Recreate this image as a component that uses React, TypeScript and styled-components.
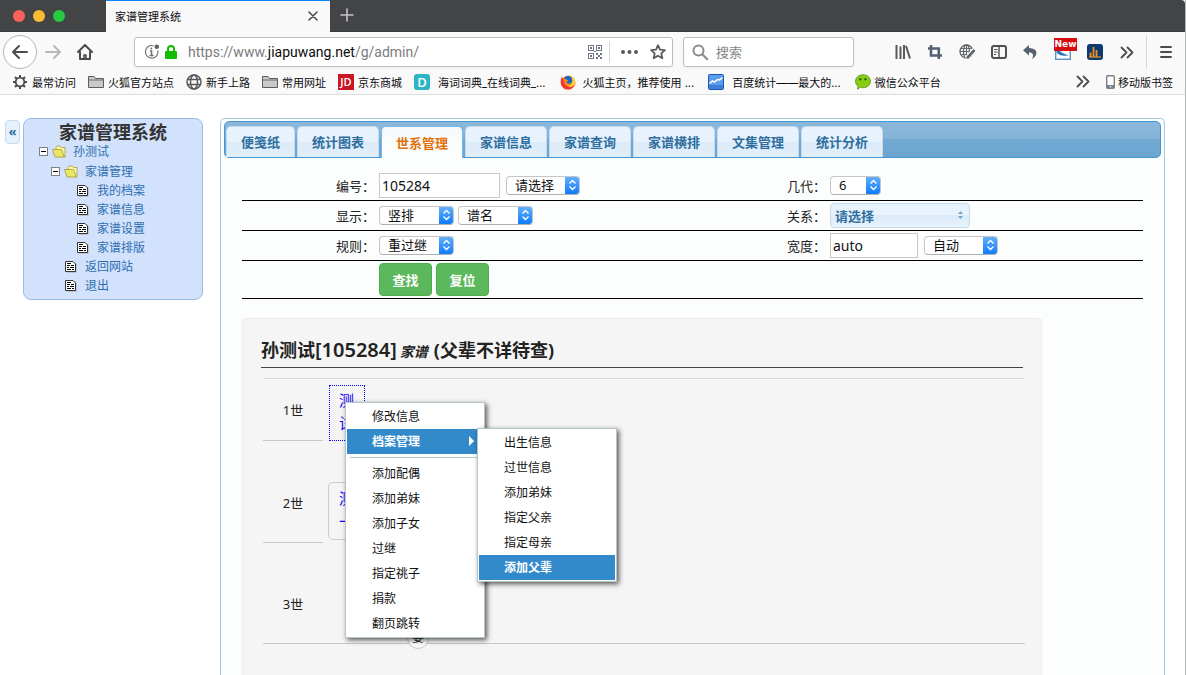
import React from "react";
import styled, { createGlobalStyle, css } from "styled-components";

const Global = createGlobalStyle`
  *, *::before, *::after { box-sizing: border-box; }
  html, body, #root { height: 100%; }
  body {
    margin: 0;
    overflow: hidden;
    background: #fff;
    color: #222;
    font-family: "Noto Sans", "Noto Sans CJK SC", sans-serif;
    font-size: 13px;
  }
  button, input, select { font: inherit; color: inherit; margin: 0; }
  a { color: inherit; text-decoration: none; }
  ul { list-style: none; margin: 0; padding: 0; }
  svg { display: block; flex: none; }
`;

/* ---------- browser chrome ---------- */

const Window = styled.div`
  display: flex;
  flex-direction: column;
  height: 100vh;
  border-right: 1px solid #b4b6b8;
`;

const TitleBar = styled.div`
  display: flex;
  flex: none;
  height: 32px;
  background: #434445;
  border-bottom: 1px solid #38393b;
  border-top-right-radius: 4px;
`;

const Lights = styled.div`
  display: flex;
  align-items: center;
  gap: 8px;
  width: 106px;
  padding-left: 13px;
`;

const Light = styled.button<{ $color: string }>`
  width: 12px;
  height: 12px;
  padding: 0;
  border: 0;
  border-radius: 50%;
  background: ${(p) => p.$color};
`;

const PageTab = styled.div`
  display: flex;
  align-items: center;
  justify-content: space-between;
  width: 224px;
  height: 32px;
  padding: 0 12px 2px 9px;
  background: #f9f9fa;
  border-top: 1px solid #0a84ff;
  color: #0c0c0d;
  font-size: 11px;
`;

const IconButton = styled.button<{ $w?: number; $dim?: boolean }>`
  display: flex;
  align-items: center;
  justify-content: center;
  flex: none;
  width: ${(p) => p.$w ?? 32}px;
  height: 32px;
  padding: 0;
  border: 0;
  background: none;
  color: ${(p) => (p.$dim ? "#b9b9ba" : "#4c4c4f")};
`;

const NewTab = styled(IconButton)`
  width: 34px;
  height: 30px;
  color: #c4c4c5;
`;

const NavBar = styled.div`
  display: flex;
  flex: none;
  align-items: center;
  height: 40px;
  padding: 0 3px;
  background: #f9f9fa;
`;

const BackButton = styled(IconButton)`
  width: 34px;
  height: 34px;
  border: 1px solid #b3b3b4;
  border-radius: 50%;
  background: #fff;
`;

const fieldLook = css`
  display: flex;
  align-items: center;
  height: 30px;
  border: 1px solid #bfbfc0;
  border-radius: 3px;
  background: #fff;
  box-shadow: 0 1px 3px rgba(0, 0, 0, 0.05);
`;

const UrlField = styled.div`
  ${fieldLook}
  flex: 1;
  margin-left: 33px;
  padding-left: 9px;
`;

const SiteIdentity = styled.span`
  display: flex;
  align-items: center;
  gap: 5px;
`;

const UrlText = styled.a`
  flex: 1;
  margin-left: 11px;
  font-family: Roboto, "Liberation Sans", sans-serif;
  font-size: 14px;
  color: #7b7b7c;
  b { font-weight: 400; color: #0c0c0d; }
`;

const FieldDivider = styled.span`
  width: 1px;
  height: 22px;
  margin: 0 5px 0 7px;
  background: #d7d7db;
`;

const SearchField = styled.label`
  ${fieldLook}
  width: 171px;
  margin: 0 33px 0 10px;
  padding-left: 8px;
  gap: 7px;
`;

const SearchInput = styled.input`
  width: 120px;
  padding: 0;
  border: 0;
  outline: 0;
  background: none;
  font-size: 13px;
  &::placeholder { color: #858586; opacity: 1; }
`;

const NavDivider = styled.span`
  width: 1px;
  height: 34px;
  margin: 0 3px;
  background: #d7d7db;
`;

const Bookmarks = styled.nav`
  display: flex;
  flex: none;
  align-items: center;
  height: 23px;
  padding: 0 12px 3px;
  background: #f9f9fa;
  border-bottom: 1px solid #dcdcdd;
  color: #0c0c0d;
  font-family: Inter, "Noto Sans CJK SC", sans-serif;
  font-size: 11px;
  white-space: nowrap;
`;

const Bookmark = styled.a<{ $gap?: number; $after?: number }>`
  display: flex;
  align-items: center;
  gap: ${(p) => p.$gap ?? 4}px;
  margin-right: ${(p) => p.$after ?? 12}px;
`;

const MoreBookmarks = styled(IconButton)`
  width: 14px;
  height: 20px;
  margin: 0 16px 0 auto;
`;

/* ---------- page ---------- */

const Page = styled.div`
  display: flex;
  flex: 1;
  align-items: flex-start;
  min-height: 0;
  padding: 23px 20px 0 5px;
`;

const Collapse = styled.button`
  width: 15px;
  height: 24px;
  margin: 2px 3px 0 0;
  padding: 0 0 3px;
  border: 1px solid #c5dbec;
  border-radius: 4px;
  background: #e6f1fb;
  color: #2e6e9e;
  font-weight: 700;
  font-size: 13px;
  line-height: 18px;
`;

const Sidebar = styled.aside`
  width: 180px;
  margin-right: 17px;
  padding: 0 0 4px;
  border: 1px solid #99bbe8;
  border-radius: 8px;
  background: #d2e2fc;
`;

const SidebarTitle = styled.h1`
  margin: 0;
  padding-top: 3px;
  height: 22px;
  line-height: 20px;
  font-size: 18px;
  font-weight: 700;
  text-align: center;
  color: #333;
`;

const TreeRow = styled.li<{ $level: number; $folder?: boolean }>`
  display: flex;
  align-items: center;
  height: ${(p) => (p.$folder ? 20 : 19)}px;
  padding-left: ${(p) => (p.$folder ? 3 : 5) + p.$level * 12}px;
  font-size: 12px;
  line-height: 19px;
  color: #2e6eb0;
  a { margin-left: ${(p) => (p.$folder ? 7 : 8)}px; }
`;

const Toggle = styled.button`
  display: flex;
  padding: 0;
  margin-right: 4px;
  border: 0;
  background: none;
`;

const Main = styled.main`
  display: flex;
  flex-direction: column;
  flex: 1;
  align-self: stretch;
  min-width: 0;
  padding: 2px 3px 0;
  border: 1px solid #a6c9e2;
  border-bottom: 0;
  border-radius: 5px 5px 0 0;
  background: #fcfdfd;
`;

const TabStrip = styled.div`
  display: flex;
  flex: none;
  align-items: flex-end;
  gap: 2px;
  height: 37px;
  padding-left: 1px;
  border: 1px solid #4297d7;
  border-radius: 5px;
  background: linear-gradient(#8bb7da 0, #84b2d7 50%, #72a9d3 50%, #6da5d1 100%);
`;

const Tab = styled.button<{ $active?: boolean }>`
  height: 31px;
  padding: 0 14px 1px;
  border: 1px solid #c5dbec;
  border-bottom: 0;
  border-radius: 5px 5px 0 0;
  background: linear-gradient(#e8f2fc 50%, #dcebf9 50%, #e2effb);
  color: #2e6e9e;
  font-size: 13px;
  font-weight: 700;
  white-space: nowrap;
  ${(p) =>
    p.$active &&
    css`
      height: 32px;
      margin-bottom: -1px;
      border-color: #79b7e7;
      background: linear-gradient(#f4f8fb, #fcfdfd 60%);
      color: #e17009;
    `}
`;

const FormTable = styled.table`
  width: calc(100% - 36px);
  margin: 13px 0 0 18px;
  border-collapse: collapse;
  table-layout: fixed;
  td, th {
    height: 30px;
    padding: 0;
    border-bottom: 1px solid #000;
    text-align: left;
    font-weight: 400;
  }
  th { padding-left: 94px; }
  tr:first-child td { height: 29px; }
  tr:first-child th { height: 29px; }
  tr:last-child td { height: 38px; }
`;

const Column = styled.col<{ $w: number }>`
  width: ${(p) => p.$w}px;
`;

const Controls = styled.div<{ $gap?: number }>`
  display: flex;
  align-items: center;
  gap: ${(p) => p.$gap ?? 4}px;
`;

const TextBox = styled.input<{ $w: number }>`
  width: ${(p) => p.$w}px;
  height: 25px;
  padding: 0 2px;
  border: 1px solid #c8c8c8;
  background: #fff;
  color: #111;
  font-size: 14px;
`;

const SelectBox = styled.span<{ $w: number }>`
  display: flex;
  width: ${(p) => p.$w}px;
  height: 19px;
  border: 1px solid #c6c6c6;
  border-bottom-color: #b0b0b0;
  border-radius: 4px;
  background: #fff;
  overflow: hidden;
  select {
    flex: 1;
    min-width: 0;
    height: 17px;
    padding: 0 0 0 8px;
    border: 0;
    appearance: none;
    background: none;
    color: #111;
    line-height: 17px;
  }
`;

const Cap = styled.span`
  display: flex;
  align-items: center;
  justify-content: center;
  width: 15px;
  margin: -1px -1px -1px 0;
  background: linear-gradient(#66b1fb, #0a79fb);
`;

const RelationButton = styled.button`
  display: flex;
  align-items: center;
  justify-content: space-between;
  width: 140px;
  height: 25px;
  padding: 0 6px 0 4px;
  border: 1px solid #c5dbec;
  border-radius: 4px;
  background: linear-gradient(#e8f2fc 50%, #dcebf9 50%, #e6f2fc);
  color: #2e6e9e;
  font-weight: 700;
`;

const GreenButton = styled.button`
  min-width: 53px;
  height: 33px;
  padding: 0 12px;
  border: 1px solid #4cae4c;
  border-radius: 4px;
  background: #5cb85c;
  color: #fff;
  font-weight: 700;
`;

const Card = styled.section`
  position: relative;
  flex: 1;
  width: 800px;
  max-width: 100%;
  margin: 19px 0 0 18px;
  padding: 20px 16px 0 18px;
  border: 1px solid #ececec;
  border-bottom: 0;
  border-radius: 4px 4px 0 0;
  background: #f5f5f5;
`;

const CardTitle = styled.h2`
  display: flex;
  align-items: baseline;
  height: 29px;
  margin: 0 2px 10px 0;
  border-bottom: 1px solid #444;
  line-height: 22px;
  font-size: 18px;
  font-weight: 700;
  color: #222;
  em { font-size: 14px; margin-right: 6px; }
`;

const Digits = styled.span`
  margin-right: 3px;
  font-size: 20px;
  font-weight: 600;
`;

const Generations = styled.div`
  margin-left: 2px;
  border-top: 1px solid #dadada;
  border-bottom: 1px solid #c8c8c8;
`;

const Generation = styled.div<{ $h: number }>`
  display: flex;
  gap: 5px;
  height: ${(p) => p.$h}px;
`;

const GenerationName = styled.div<{ $later?: boolean; $last?: boolean }>`
  display: flex;
  align-items: center;
  justify-content: center;
  width: 60px;
  padding-top: ${(p) => (p.$later ? 22 : 0)}px;
  color: #222;
  border-bottom: ${(p) => (p.$last ? 0 : "1px solid #c8c8c8")};
`;

const Person = styled.a<{ $focus?: boolean }>`
  align-self: flex-end;
  width: 38px;
  height: 58px;
  padding: 4px 10px;
  margin-bottom: 3px;
  border: 1px solid #ccc;
  border-radius: 5px;
  color: #1a00ff;
  font-size: 15px;
  line-height: 23px;
  ${(p) =>
    p.$focus &&
    css`
      margin-bottom: -1px;
      border-color: transparent;
      border-radius: 2px;
      outline: 1px dotted #00f;
      outline-offset: -2px;
    `}
`;

const SpouseBadge = styled.span`
  position: absolute;
  left: 164px;
  top: 308px;
  width: 22px;
  height: 22px;
  border: 1px solid #ccc;
  border-radius: 50%;
  background: #fbfbfb;
  font-size: 12px;
  line-height: 20px;
  text-align: center;
`;

const Menu = styled.ul<{ $x: number; $y: number }>`
  position: absolute;
  z-index: 2;
  left: ${(p) => p.$x}px;
  top: ${(p) => p.$y}px;
  width: 140px;
  padding: 1px;
  border: 1px solid #b4c6c6;
  background: #fff;
  box-shadow: 2px 2px 5px rgba(0, 0, 0, 0.65);
`;

const MenuItem = styled.li`
  position: relative;
`;

const MenuButton = styled.button<{ $on?: boolean }>`
  display: flex;
  align-items: center;
  justify-content: space-between;
  width: 100%;
  height: 25px;
  padding: 0 9px 0 25px;
  border: 0;
  background: ${(p) => (p.$on ? "#338acb" : "none")};
  color: ${(p) => (p.$on ? "#fff" : "#111")};
  font-size: 12px;
  font-weight: ${(p) => (p.$on ? 700 : 400)};
`;

const MenuLine = styled.li`
  height: 1px;
  margin: 3px 3px;
  background: #b4c6c6;
`;

/* ---------- icons ---------- */

const stroke = {
  fill: "none",
  stroke: "currentColor",
  strokeWidth: 2,
  strokeLinecap: "round" as const,
  strokeLinejoin: "round" as const,
};

const BackIcon = () => (
  <svg width="16" height="16" viewBox="0 0 16 16" {...stroke}>
    <path d="M15 8H1M7 2L1 8l6 6" />
  </svg>
);

const ForwardIcon = () => (
  <svg width="16" height="16" viewBox="0 0 16 16" {...stroke}>
    <path d="M1 8h14M9 2l6 6-6 6" />
  </svg>
);

const HomeIcon = () => (
  <svg width="16" height="16" viewBox="0 0 16 16" {...stroke}>
    <path d="M1 8l7-7 7 7M3 8v7h10V8" />
    <path d="M7 15v-4h2v4" strokeWidth="1.6" />
  </svg>
);

const InfoIcon = () => (
  <svg width="16" height="16" viewBox="0 0 16 16" fill="none" stroke="#737373" strokeWidth="1.2">
    <path d="M9.5 1.8A6.3 6.3 0 1 0 13.8 6.3" />
    <path d="M6 7h1.5v4.5M5.5 11.5h4" strokeWidth="1.6" />
    <circle cx="7.3" cy="4.4" r="1" fill="#737373" stroke="none" />
    <circle cx="12.8" cy="2.8" r="2.3" fill="#636365" stroke="none" />
  </svg>
);

const LockIcon = () => (
  <svg width="12" height="14" viewBox="0 0 12 14">
    <path d="M3 7V4a3 3 0 0 1 6 0v3" fill="none" stroke="#12bc00" strokeWidth="2" />
    <rect y="6" width="12" height="8" rx="1" fill="#12bc00" />
  </svg>
);

const QrIcon = () => (
  <svg width="14" height="14" viewBox="0 0 14 14" fill="#717786">
    <path
      fillRule="evenodd"
      d="M0 0h6v6H0zM1 1v4h4V1zM8 0h6v6H8zM9 1v4h4V1zM0 8h6v6H0zM1 9v4h4V9z"
    />
    <path d="M2 2h2v2H2zM10 2h2v2h-2zM2 10h2v2H2zM8 8h2v2H8zM10 10h2v2h-2zM12 8h2v2h-2zM8 12h2v2h-2zM12 12h2v2h-2zM6 6h2v1H6z" />
  </svg>
);

const DotsIcon = () => (
  <svg width="17" height="4" viewBox="0 0 17 4" fill="#5a5a5c">
    <circle cx="2" cy="2" r="2" />
    <circle cx="8.5" cy="2" r="2" />
    <circle cx="15" cy="2" r="2" />
  </svg>
);

const StarIcon = () => (
  <svg width="16" height="16" viewBox="0 0 16 16" fill="none" stroke="#5a5a5c" strokeWidth="1.8" strokeLinejoin="round">
    <path d="M8 1.2l2 4.4 4.9.5-3.6 3.3 1 4.9L8 11.8l-4.3 2.5 1-4.9L1.1 6.1 6 5.6z" />
  </svg>
);

const SearchIcon = () => (
  <svg width="17" height="17" viewBox="0 0 17 17" fill="none" stroke="#8a8a8c" strokeWidth="2">
    <circle cx="6.5" cy="6.5" r="5" />
    <path d="M10.2 10.2l5.6 5.6" />
  </svg>
);

const LibraryIcon = () => (
  <svg width="16" height="14" viewBox="0 0 16 14" fill="none" stroke="#5a5a5c" strokeWidth="2">
    <path d="M1.5 0v14M5.5 1.5V14M9 0v14M11 1l4 12.5" />
  </svg>
);

const CropIcon = () => (
  <svg width="16" height="16" viewBox="0 0 16 16" fill="none" stroke="#556070" strokeWidth="2.6">
    <path d="M4 1v10.5h11M1 4.5h10.8V15" />
  </svg>
);

const GlobePenIcon = () => (
  <svg width="17" height="16" viewBox="0 0 17 16" fill="none" stroke="#606468" strokeWidth="1.3">
    <circle cx="7.5" cy="7.5" r="6.5" />
    <ellipse cx="7.5" cy="7.5" rx="3" ry="6.5" />
    <path d="M1 7.500h13M2 4.400h11M2 10.600h7M7.500 1v13" strokeWidth="1" />
    <path d="M15.500 5.500L9 13l-.800 2" stroke="#f9f9fa" strokeWidth="4.500" />
    <path d="M15.500 6L9 13l-.800 1.500" strokeWidth="2.600" />
  </svg>
);

const SidebarIcon = () => (
  <svg width="16" height="14" viewBox="0 0 16 14" fill="none" stroke="#4f4f52" strokeWidth="2">
    <rect x="1" y="1" width="14" height="12" rx="2" />
    <path d="M8 1v12" strokeWidth="1.4" />
    <path d="M3 4.5h3.5M3 7h3.5M3 9.5h2" strokeWidth="1" />
  </svg>
);

const UndoIcon = () => (
  <svg width="16" height="14" viewBox="0 0 16 14" fill="#56616d">
    <path d="M6 0L0 5.2 6 10.4V7.4c4 0 5.200 2.200 3 6.600 6.600-4 6.300-10.600-3-11z" />
  </svg>
);

const NewBox = styled.span`
  display: flex;
  flex-direction: column;
  flex: none;
  width: 28px;
  height: 28px;
  padding-left: 5px;
  b {
    flex: none;
    width: 23px;
    height: 13px;
    background: #d70c12;
    color: #fff;
    font: 700 9px/13px "DejaVu Sans", sans-serif;
    text-align: center;
  }
`;

const NewIcon = () => (
  <NewBox>
    <b>New</b>
    <svg width="17" height="9" viewBox="0 0 17 9">
      <rect x="1.700" y="-4" width="14.600" height="12.300" fill="#fff" stroke="#5b93c3" strokeWidth="1.400" />
      <path d="M2.500 0H6c2 2.500 5 3 8.500 4.200-4.500 1.300-9.500.500-12-2.700z" fill="#2f76b5" />
    </svg>
  </NewBox>
);

const ChartIcon = () => (
  <svg width="16" height="16" viewBox="0 0 16 16">
    <rect width="16" height="16" rx="3" fill="#0b3970" />
    <path d="M3.500 13V8.500M6.500 13V3M9.500 13V6" stroke="#f4901e" strokeWidth="1.800" fill="none" />
    <path d="M2 13h12" stroke="#f4901e" strokeWidth="1.200" />
  </svg>
);

const MoreIcon = () => (
  <svg width="14" height="13" viewBox="0 0 14 13" {...stroke}>
    <path d="M1.500 1.500l5 5-5 5M7.500 1.500l5 5-5 5" strokeWidth="1.800" />
  </svg>
);

const MenuIcon = () => (
  <svg width="12" height="12" viewBox="0 0 12 12" {...stroke}>
    <path d="M1 1h10M1 6h10M1 11h10" />
  </svg>
);

const GearIcon = () => (
  <svg width="16" height="16" viewBox="0 0 16 16" fill="none" stroke="#4a4a4d">
    <circle cx="8" cy="8" r="4.300" strokeWidth="1.800" />
    <path
      d="M8 1v2.500M8 12.500V15M1 8h2.500M12.500 8H15M3 3l1.800 1.800M11.200 11.200L13 13M13 3l-1.800 1.800M4.800 11.200L3 13"
      strokeWidth="2"
    />
  </svg>
);

const FolderIcon = () => (
  <svg width="16" height="16" viewBox="0 0 16 16" fill="#c9c9ca" stroke="#5c5c5e">
    <path d="M.5 13.500v-11H6l1.500 2h8v9z" />
    <path d="M.5 6h15" strokeWidth=".8" />
  </svg>
);

const GlobeIcon = () => (
  <svg width="16" height="16" viewBox="0 0 16 16" fill="none" stroke="#58585a" strokeWidth="1.500">
    <circle cx="8" cy="8" r="7" />
    <ellipse cx="8" cy="8" rx="3.500" ry="7" />
    <path d="M1.500 5.500h13M1.500 10.500h13" />
  </svg>
);

const LogoTile = styled.span<{ $bg: string; $r?: number; $size?: number }>`
  display: flex;
  align-items: center;
  justify-content: center;
  flex: none;
  width: 16px;
  height: 16px;
  border-radius: ${(p) => p.$r ?? 0}px;
  background: ${(p) => p.$bg};
  color: #fff;
  font: 600 ${(p) => p.$size ?? 11}px/16px "Open Sans", sans-serif;
`;

const FirefoxIcon = () => (
  <svg width="16" height="16" viewBox="0 0 16 16">
    <circle cx="8.300" cy="8.300" r="6.800" fill="#ff9b1a" />
    <path d="M2 2.500C-1 8 1 14.500 7 15.600 12 16.300 16 12 15.500 7c-.300 3.500-3 6-6.500 5.500C5 12 3.300 8.500 4.500 5 3 5 2.300 4 2 2.500z" fill="#f3382f" />
    <path d="M11 2c3 1.500 4.800 4.500 3.800 8C13.500 13 10 13.500 8 12.500c3-.500 4.500-3 3.800-5.500z" fill="#ffd52e" />
    <circle cx="8" cy="6.300" r="4.300" fill="#1667c9" />
    <path d="M3.500 5C5.500 4.600 7 5.300 8.500 6.500 7.500 7.500 6.500 7 6.500 8.300c.800 1.700 3 1.700 4.500.700-1 3.500-7.500 3-7.500-4z" fill="#ff8a1c" />
  </svg>
);

const StatsIcon = () => (
  <svg width="16" height="16" viewBox="0 0 16 16">
    <rect x=".5" y=".5" width="15" height="15" rx="1" fill="#5b9cee" stroke="#1b57b0" />
    <path d="M1 11h14v4H1z" fill="#3f7ddb" />
    <path d="M1.500 9.500l3-2.500 2 1 3-2.500 2 .500 3-2.500" fill="none" stroke="#fff" strokeWidth="1.600" />
  </svg>
);

const WechatIcon = () => (
  <svg width="16" height="16" viewBox="0 0 16 16">
    <path d="M8 .700c4.300 0 7.500 2.800 7.500 6.500S12.300 13.700 8 13.700c-1 0-1.800-.100-2.600-.400L2.500 15.300l.500-3C1.400 11 .500 9.300.500 7.200.500 3.500 3.700.700 8 .700z" fill="#88cc12" stroke="#5f8f22" strokeWidth=".8" />
    <circle cx="5.300" cy="5.300" r="1.100" fill="#24400a" />
    <circle cx="10.500" cy="5.300" r="1.100" fill="#24400a" />
  </svg>
);

const PhoneIcon = () => (
  <svg width="9" height="14" viewBox="0 0 9 14">
    <rect x=".7" y=".7" width="7.600" height="12.600" rx="1" fill="#fff" stroke="#75818b" strokeWidth="1.400" />
    <path d="M1 10h7v3H1z" fill="#75818b" />
    <circle cx="4.500" cy="11.700" r=".8" fill="#fff" />
  </svg>
);

const CapArrows = () => (
  <svg width="9" height="12" viewBox="0 0 9 12" fill="none" stroke="#fff" strokeWidth="1.400">
    <path d="M1.500 4.500l3-3 3 3M1.500 7.500l3 3 3-3" />
  </svg>
);

const MinusBox = () => (
  <svg width="9" height="9" viewBox="0 0 9 9">
    <rect x=".5" y=".5" width="8" height="8" fill="#fff" stroke="#808080" />
    <path d="M2 4.500h5" stroke="#000" />
  </svg>
);

const OpenFolder = () => (
  <svg width="14" height="13" viewBox="0 0 14 13" stroke="#a39a3a" strokeWidth=".8">
    <path d="M4 11V2.500L5 1h3l1.500 1.500h3.500v9.500z" fill="#fdf9a6" />
    <path d="M.500 4.500h9l3 7.500H3z" fill="#ece667" />
  </svg>
);

const DocIcon = () => (
  <svg width="12" height="13" viewBox="0 -1 12 13">
    <path d="M2 1.500h8l1.500 2v8H2z" fill="#a5a5a5" />
    <path d="M.500.500h7.500l2.500 2.500v7.500H.500z" fill="#fff" stroke="#333" />
    <path d="M2 2.500h4M2 4.500h3M6 4.500h3M2 6.500h2M5 6.500h4M2 8.500h4M7 8.500h2" stroke="#000" />
  </svg>
);

/* ---------- composed parts ---------- */

type PickProps = { label: string; width: number; value: string; id?: string };
const Pick = ({ label, width, value, id }: PickProps) => (
  <SelectBox $w={width}>
    <select id={id} aria-label={label} defaultValue={value}>
      <option>{value}</option>
    </select>
    <Cap>
      <CapArrows />
    </Cap>
  </SelectBox>
);

const tree = [
  { text: "孙测试", level: 1, folder: true },
  { text: "家谱管理", level: 2, folder: true },
  { text: "我的档案", level: 4 },
  { text: "家谱信息", level: 4 },
  { text: "家谱设置", level: 4 },
  { text: "家谱排版", level: 4 },
  { text: "返回网站", level: 3 },
  { text: "退出", level: 3 },
];

const tabs = ["便笺纸", "统计图表", "世系管理", "家谱信息", "家谱查询", "家谱横排", "文集管理", "统计分析"];
const menuItems = ["添加配偶", "添加弟妹", "添加子女", "过继", "指定祧子", "捐款", "翻页跳转"];
const subItems = ["出生信息", "过世信息", "添加弟妹", "指定父亲", "指定母亲", "添加父辈"];

const BrowserChrome = () => (
  <>
    <TitleBar>
      <Lights>
        <Light $color="#fc605b" aria-label="关闭" />
        <Light $color="#fdbc2f" aria-label="最小化" />
        <Light $color="#27ca40" aria-label="缩放" />
      </Lights>
      <PageTab>
        家谱管理系统
        <IconButton $w={10} aria-label="关闭标签页">
          <svg width="10" height="10" viewBox="0 0 10 10" {...stroke} strokeWidth="1.600">
            <path d="M1 1l8 8M9 1L1 9" />
          </svg>
        </IconButton>
      </PageTab>
      <NewTab aria-label="新标签页">
        <svg width="14" height="14" viewBox="0 0 14 14" {...stroke} strokeWidth="1.600">
          <path d="M7 1v12M1 7h12" />
        </svg>
      </NewTab>
    </TitleBar>
    <NavBar>
      <BackButton aria-label="后退"><BackIcon /></BackButton>
      <IconButton $dim aria-label="前进"><ForwardIcon /></IconButton>
      <IconButton aria-label="主页"><HomeIcon /></IconButton>
      <UrlField>
        <SiteIdentity>
          <InfoIcon />
          <LockIcon />
        </SiteIdentity>
        <UrlText href="#">https://www.<b>jiapuwang.net</b>/g/admin/</UrlText>
        <QrIcon />
        <FieldDivider />
        <IconButton $w={29} aria-label="页面操作"><DotsIcon /></IconButton>
        <IconButton $w={28} aria-label="收藏"><StarIcon /></IconButton>
      </UrlField>
      <SearchField>
        <SearchIcon />
        <SearchInput placeholder="搜索" aria-label="搜索" />
      </SearchField>
      <IconButton aria-label="书库"><LibraryIcon /></IconButton>
      <IconButton aria-label="截图"><CropIcon /></IconButton>
      <IconButton aria-label="网页编辑"><GlobePenIcon /></IconButton>
      <IconButton aria-label="侧栏"><SidebarIcon /></IconButton>
      <IconButton aria-label="撤销"><UndoIcon /></IconButton>
      <IconButton><NewIcon /></IconButton>
      <IconButton aria-label="统计"><ChartIcon /></IconButton>
      <IconButton aria-label="更多"><MoreIcon /></IconButton>
      <NavDivider />
      <IconButton aria-label="菜单"><MenuIcon /></IconButton>
    </NavBar>
    <Bookmarks>
      <Bookmark href="#"><GearIcon />最常访问</Bookmark>
      <Bookmark href="#"><FolderIcon />火狐官方站点</Bookmark>
      <Bookmark href="#"><GlobeIcon />新手上路</Bookmark>
      <Bookmark href="#"><FolderIcon />常用网址</Bookmark>
      <Bookmark href="#"><LogoTile $bg="#c91623">JD</LogoTile>京东商城</Bookmark>
      <Bookmark href="#" $gap={8} $after={14}><LogoTile $bg="#2bb5c5" $r={3} $size={13}>D</LogoTile>海词词典_在线词典_...</Bookmark>
      <Bookmark href="#" $gap={7} $after={14}><FirefoxIcon />火狐主页，推荐使用 ...</Bookmark>
      <Bookmark href="#" $gap={8} $after={14}><StatsIcon />百度统计——最大的...</Bookmark>
      <Bookmark href="#"><WechatIcon />微信公众平台</Bookmark>
      <MoreBookmarks aria-label="更多书签"><MoreIcon /></MoreBookmarks>
      <Bookmark href="#" $after={0} $gap={3}><PhoneIcon />移动版书签</Bookmark>
    </Bookmarks>
  </>
);

const ContextMenu = () => (
  <Menu $x={102} $y={83}>
    <MenuItem><MenuButton>修改信息</MenuButton></MenuItem>
    <MenuItem>
      <MenuButton $on>
        档案管理
        <svg width="5" height="10" viewBox="0 0 5 10" fill="#fff"><path d="M0 0l5 5-5 5z" /></svg>
      </MenuButton>
      <Menu $x={130} $y={-1}>
        {subItems.map((t, i) => (
          <MenuItem key={t}><MenuButton $on={i === 5}>{t}</MenuButton></MenuItem>
        ))}
      </Menu>
    </MenuItem>
    <MenuLine />
    {menuItems.map((t) => (
      <MenuItem key={t}><MenuButton>{t}</MenuButton></MenuItem>
    ))}
  </Menu>
);

export default function App() {
  return (
    <Window>
      <Global />
      <BrowserChrome />
      <Page>
        <Collapse aria-label="收起">«</Collapse>
        <Sidebar>
          <SidebarTitle>家谱管理系统</SidebarTitle>
          <ul>
            {tree.map((n) => (
              <TreeRow key={n.text} $level={n.level} $folder={n.folder}>
                {n.folder ? (
                  <>
                    <Toggle aria-label="折叠"><MinusBox /></Toggle>
                    <OpenFolder />
                  </>
                ) : (
                  <DocIcon />
                )}
                <a href="#">{n.text}</a>
              </TreeRow>
            ))}
          </ul>
        </Sidebar>
        <Main>
          <TabStrip>
            {tabs.map((t, i) => (
              <Tab key={t} $active={i === 2}>{t}</Tab>
            ))}
          </TabStrip>
          <FormTable>
            <colgroup>
              <Column $w={137} />
              <col />
              <Column $w={137} />
              <Column $w={313} />
            </colgroup>
            <tbody>
              <tr>
                <th><label htmlFor="no">编号：</label></th>
                <td>
                  <Controls $gap={6}>
                    <TextBox id="no" $w={121} defaultValue="105284" />
                    <Pick label="选择" width={74} value="请选择" />
                  </Controls>
                </td>
                <th><label htmlFor="gen">几代：</label></th>
                <td><Pick id="gen" label="几代" width={51} value="6" /></td>
              </tr>
              <tr>
                <th><label htmlFor="show">显示：</label></th>
                <td>
                  <Controls>
                    <Pick id="show" label="显示" width={75} value="竖排" />
                    <Pick label="名称" width={75} value="谱名" />
                  </Controls>
                </td>
                <th><label htmlFor="rel">关系：</label></th>
                <td>
                  <RelationButton id="rel">
                    请选择
                    <svg width="5" height="8" viewBox="0 0 5 8" fill="#6da8d5"><path d="M0 3l2.500-3L5 3zM0 5l2.500 3L5 5z" /></svg>
                  </RelationButton>
                </td>
              </tr>
              <tr>
                <th><label htmlFor="rule">规则：</label></th>
                <td><Pick id="rule" label="规则" width={75} value="重过继" /></td>
                <th><label htmlFor="width">宽度：</label></th>
                <td>
                  <Controls $gap={6}>
                    <TextBox id="width" $w={88} defaultValue="auto" />
                    <Pick label="宽度方式" width={74} value="自动" />
                  </Controls>
                </td>
              </tr>
              <tr>
                <td />
                <td colSpan={3}>
                  <Controls>
                    <GreenButton>查找</GreenButton>
                    <GreenButton>复位</GreenButton>
                  </Controls>
                </td>
              </tr>
            </tbody>
          </FormTable>
          <Card>
            <CardTitle>
              孙测试<Digits>[105284]</Digits><em>家谱</em>(父辈不详待查)
            </CardTitle>
            <Generations>
              <Generation $h={62}>
                <GenerationName>1世</GenerationName>
                <Person href="#" $focus>测试</Person>
              </Generation>
              <Generation $h={102}>
                <GenerationName $later>2世</GenerationName>
                <Person href="#">测一</Person>
              </Generation>
              <Generation $h={100}>
                <GenerationName $later $last>3世</GenerationName>
              </Generation>
            </Generations>
            <SpouseBadge>妻</SpouseBadge>
            <ContextMenu />
          </Card>
        </Main>
      </Page>
    </Window>
  );
}
